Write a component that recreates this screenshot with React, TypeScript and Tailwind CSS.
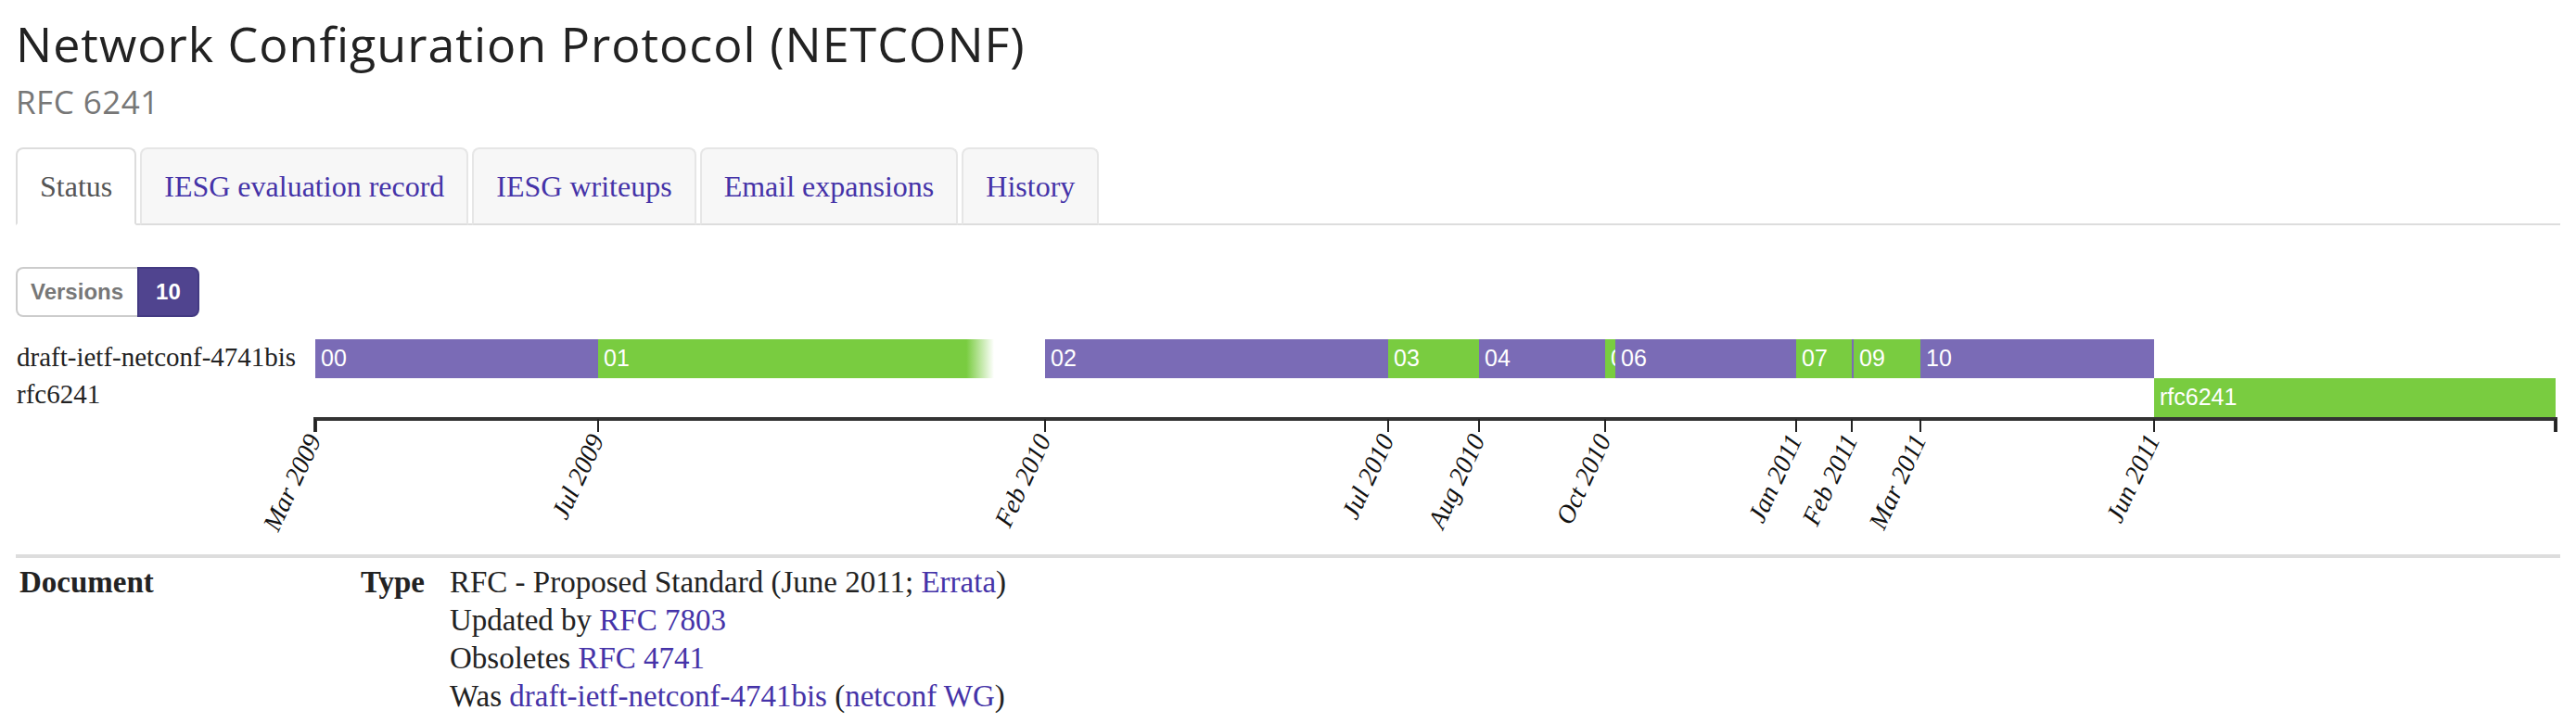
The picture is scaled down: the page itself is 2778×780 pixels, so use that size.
import React from "react";

const PURPLE = "#7a6bb6";
const GREEN = "#79cc40";
const OFF = 17; // container padding, timeline x values are page pixels

const BARS = [
  { label: "00", x1: 340, x2: 645, row: 0, color: PURPLE },
  { label: "01", x1: 645, x2: 1072, row: 0, color: GREEN, fade: true },
  { label: "02", x1: 1127, x2: 1497, row: 0, color: PURPLE },
  { label: "03", x1: 1497, x2: 1595, row: 0, color: GREEN },
  { label: "04", x1: 1595, x2: 1731, row: 0, color: PURPLE },
  { label: "05", x1: 1731, x2: 1742, row: 0, color: GREEN },
  { label: "06", x1: 1742, x2: 1937, row: 0, color: PURPLE },
  { label: "07", x1: 1937, x2: 1997, row: 0, color: GREEN },
  { label: "08", x1: 1997, x2: 1999, row: 0, color: PURPLE },
  { label: "09", x1: 1999, x2: 2071, row: 0, color: GREEN },
  { label: "10", x1: 2071, x2: 2323, row: 0, color: PURPLE },
  { label: "rfc6241", x1: 2323, x2: 2756, row: 1, color: GREEN },
];

const TICKS: [number, string][] = [
  [340, "Mar 2009"],
  [645, "Jul 2009"],
  [1127, "Feb 2010"],
  [1497, "Jul 2010"],
  [1595, "Aug 2010"],
  [1731, "Oct 2010"],
  [1937, "Jan 2011"],
  [1997, "Feb 2011"],
  [2071, "Mar 2011"],
  [2323, "Jun 2011"],
  [2756, ""],
];

const TABS = ["Status", "IESG evaluation record", "IESG writeups", "Email expansions", "History"];

function Timeline() {
  const rowTop = [16, 58];
  const rowH = [42, 44];
  const axisY = 102;
  return (
    <svg width={2744} height={240} className="block">
      <defs>
        <linearGradient id="fade01" x1="0" x2="1" y1="0" y2="0">
          <stop offset="0.93" stopColor={GREEN} stopOpacity="1" />
          <stop offset="1" stopColor={GREEN} stopOpacity="0" />
        </linearGradient>
        {BARS.map((b, i) => (
          <clipPath id={`clip${i}`} key={i}>
            <rect x={b.x1 - OFF} y={rowTop[b.row]} width={b.x2 - b.x1} height={rowH[b.row]} />
          </clipPath>
        ))}
      </defs>

      <text x={1} y={45} fontSize={29} fill="#222" fontFamily="'Liberation Serif', serif">
        draft-ietf-netconf-4741bis
      </text>
      <text x={1} y={85} fontSize={29} fill="#222" fontFamily="'Liberation Serif', serif">
        rfc6241
      </text>

      {BARS.map((b, i) => (
        <g key={b.label}>
          <rect
            x={b.x1 - OFF}
            y={rowTop[b.row]}
            width={b.x2 - b.x1}
            height={rowH[b.row]}
            fill={b.fade ? "url(#fade01)" : b.color}
          />
          <text
            x={b.x1 - OFF + 6}
            y={rowTop[b.row] + 29}
            fontSize={25}
            fill="#fff"
            fontFamily="'Liberation Sans', Arial, sans-serif"
            clipPath={`url(#clip${i})`}
          >
            {b.label}
          </text>
        </g>
      ))}

      <path
        d={`M${340 - OFF},${axisY + 14}V${axisY}H${2756 - OFF}V${axisY + 14}`}
        fill="none"
        stroke="#333"
        strokeWidth={4}
      />
      {TICKS.map(([x, t]) => (
        <g key={x}>
          <line x1={x - OFF} x2={x - OFF} y1={axisY} y2={axisY + 14} stroke="#222" strokeWidth={2} />
          {t && (
            <text
              x={x - OFF + 7}
              y={axisY + 22}
              fontSize={28}
              fontStyle="italic"
              fill="#111"
              textAnchor="end"
              fontFamily="'Liberation Serif', serif"
              transform={`rotate(-65 ${x - OFF + 7} ${axisY + 22})`}
            >
              {t}
            </text>
          )}
        </g>
      ))}
    </svg>
  );
}

export default function App() {
  return (
    <div className="w-[2778px] h-[780px] overflow-hidden bg-white px-[17px] [font-family:'Liberation_Serif',serif] text-[#222]">
      <h1 className="pt-[18px] text-[52px] leading-[58px] tracking-[1px] text-[#222] [font-family:'Open_Sans',sans-serif]">
        Network Configuration Protocol (NETCONF)
      </h1>
      <div className="mt-[13px] text-[35px] leading-[42px] tracking-[0.5px] text-[#777] [font-family:'Open_Sans',sans-serif]">
        RFC 6241
      </div>

      <ul className="mt-[28px] flex border-b-2 border-[#ddd]">
        {TABS.map((t, i) => (
          <li
            key={t}
            className={`-mb-[2px] mr-[4px] rounded-t-[8px] border-2 px-[24px] pt-[22px] pb-[22px] text-[32px] leading-[36px] ${
              i === 0
                ? "border-[#ddd] border-b-white bg-white text-[#555]"
                : "border-[#e6e6e6] border-b-[#ddd] bg-[#f7f7f7] text-[#4533a8]"
            }`}
          >
            {t}
          </li>
        ))}
      </ul>

      <div className="mt-[45px] flex h-[54px] w-fit text-[24px] font-bold [font-family:'Liberation_Sans',Arial,sans-serif]">
        <div className="flex items-center rounded-l-[8px] border-2 border-r-0 border-[#ccc] bg-white pl-[14px] pr-[15px] text-[#777]">
          Versions
        </div>
        <div className="flex items-center rounded-r-[8px] border-2 border-[#433a82] bg-[#50448f] px-[18px] text-white">
          10
        </div>
      </div>

      <div className="mt-[8px]">
        <Timeline />
      </div>

      <div className="mt-[8px] border-t-4 border-[#ddd] pt-[6px] text-[33px] leading-[41px]">
        <div className="grid grid-cols-[300px_141px_1fr]">
          <div className="pl-[4px] font-bold">Document</div>
          <div className="text-right font-bold">Type</div>
          <div className="pl-[27px]">
            <div>
              RFC - Proposed Standard (June 2011; <span className="text-[#4533a8]">Errata</span>)
            </div>
            <div>
              Updated by <span className="text-[#4533a8]">RFC 7803</span>
            </div>
            <div>
              Obsoletes <span className="text-[#4533a8]">RFC 4741</span>
            </div>
            <div>
              Was <span className="text-[#4533a8]">draft-ietf-netconf-4741bis</span> (
              <span className="text-[#4533a8]">netconf WG</span>)
            </div>
          </div>
        </div>
      </div>
    </div>
  );
}
